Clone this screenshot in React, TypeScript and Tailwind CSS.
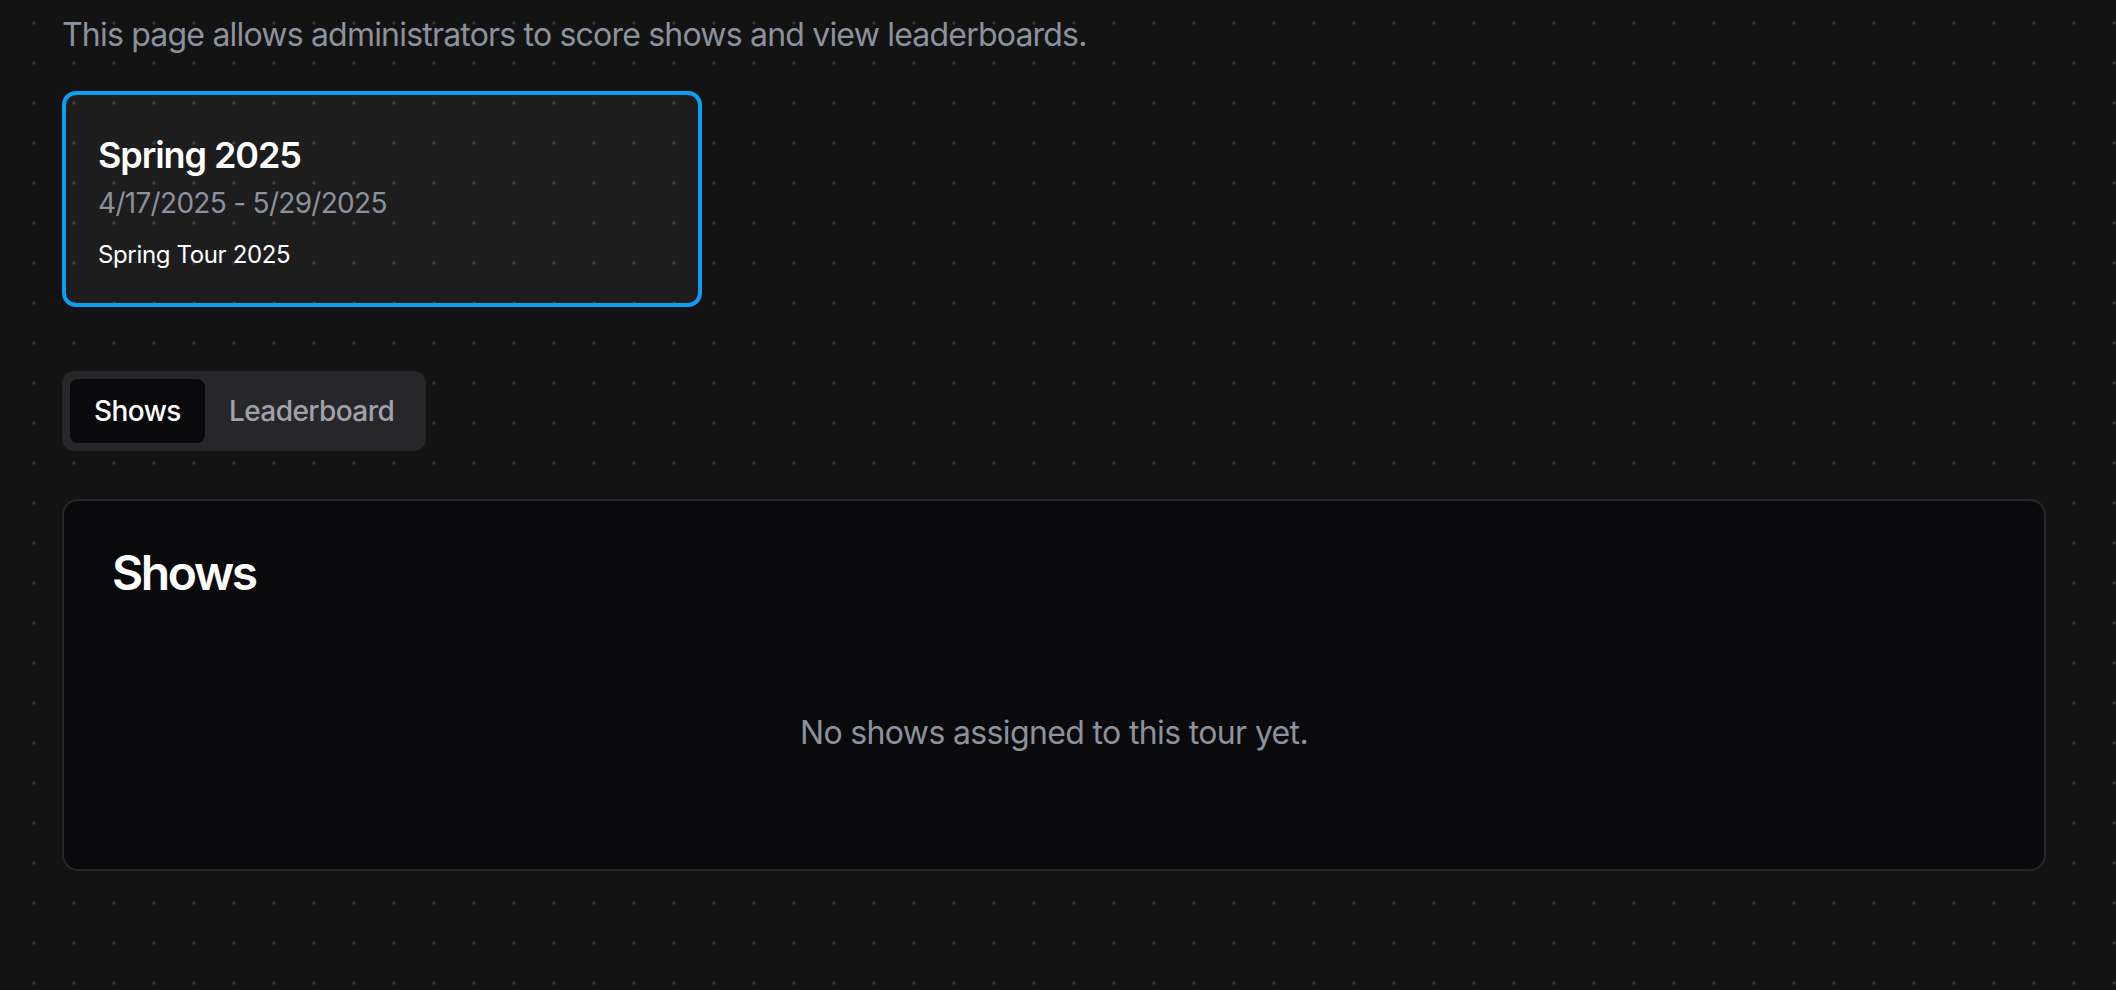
type Tour = {
  name: string;
  startDate: string;
  endDate: string;
  description: string;
};

const tours: Tour[] = [
  {
    name: "Spring 2025",
    startDate: "4/17/2025",
    endDate: "5/29/2025",
    description: "Spring Tour 2025",
  },
];

function TourCard({ tour, selected }: { tour: Tour; selected?: boolean }) {
  return (
    <button
      type="button"
      className={`w-[640px] text-left rounded-[14px] border-4 p-8 bg-white/[0.045] ${selected ? "border-[#0c9ef0]" : "border-[#2a2a2a]"}`}
    >
      <h3 className="text-[36px] leading-[56px] font-semibold tracking-[-0.03em] text-white">
        {tour.name}
      </h3>
      <p className="text-[28px] leading-[40px] tracking-[-0.025em] text-[#8d919c]">
        {tour.startDate} - {tour.endDate}
      </p>
      <p className="mt-4 text-[24px] leading-[32px] tracking-[-0.015em] text-white">
        {tour.description}
      </p>
    </button>
  );
}

function Tabs({ active }: { active: "shows" | "leaderboard" }) {
  const tabClass = (on: boolean) =>
    on
      ? "h-[64px] px-6 rounded-lg bg-[#09090b] text-white"
      : "h-[64px] px-6 rounded-lg text-[#a1a1aa]";

  return (
    <div className="inline-flex items-center p-2 rounded-xl bg-[#27272a] text-[28px] leading-[40px] font-medium tracking-[-0.02em]">
      <button type="button" className={tabClass(active === "shows")}>
        Shows
      </button>
      <button type="button" className={tabClass(active === "leaderboard")}>
        Leaderboard
      </button>
    </div>
  );
}

function ShowsCard() {
  return (
    <div className="rounded-2xl border-2 border-[#27272a] bg-[#0a0a0c]">
      <div className="p-12">
        <h2 className="text-[48px] leading-none font-semibold tracking-[-0.05em] text-white">
          Shows
        </h2>
      </div>
      <div className="px-12 pb-12">
        <p className="py-16 text-center text-[32px] leading-[48px] tracking-[-0.02em] text-[#8d919c]">
          No shows assigned to this tour yet.
        </p>
      </div>
    </div>
  );
}

export default function App() {
  return (
    <div
      className="min-h-screen bg-[#131313] bg-[radial-gradient(circle,#343434_1.4px,transparent_1.9px)] bg-[size:40px_40px] bg-[position:14px_3px] pl-[62px] pr-[70px] pt-[11px] pb-16"
      style={{ fontFamily: "Inter, 'Noto Sans', sans-serif" }}
    >
      <p className="text-[32px] leading-[48px] tracking-[-0.025em] text-[#8d919c]">
        This page allows administrators to score shows and view leaderboards.
      </p>

      <div className="mt-8 flex gap-8">
        {tours.map((tour) => (
          <TourCard key={tour.name} tour={tour} selected />
        ))}
      </div>

      <div className="mt-16">
        <Tabs active="shows" />
      </div>

      <div className="mt-12">
        <ShowsCard />
      </div>
    </div>
  );
}
